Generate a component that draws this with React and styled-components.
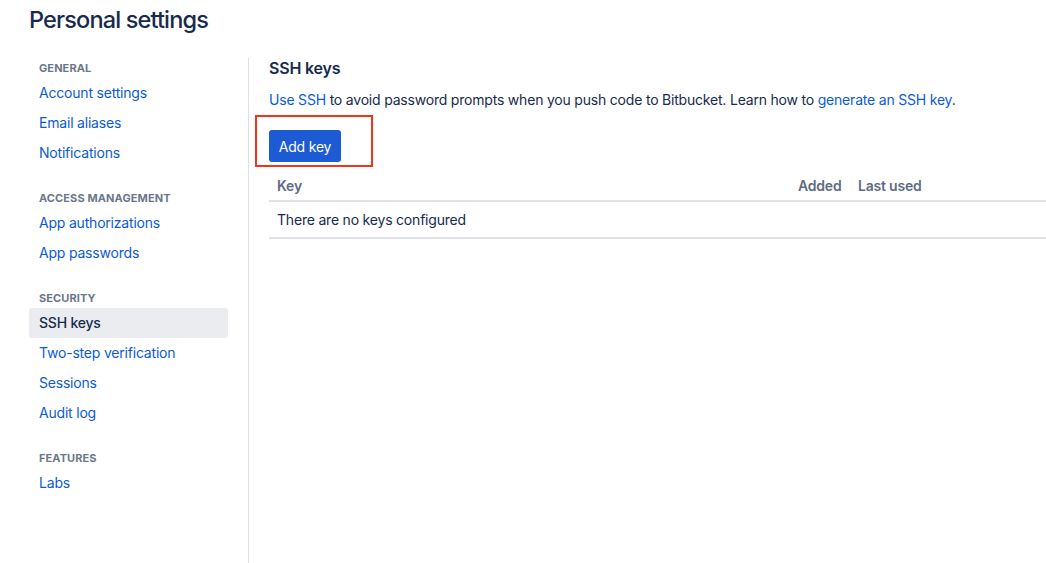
import React from "react";
import styled, { createGlobalStyle } from "styled-components";

const Global = createGlobalStyle`
  html, body { margin: 0; padding: 0; background: #fff; }
  body { font-family: Inter, "Noto Sans", sans-serif; color: #172B4D; -webkit-font-smoothing: antialiased; }
  * { box-sizing: border-box; }
`;

const Page = styled.div`
  width: 1046px;
  height: 563px;
  overflow: hidden;
  padding-left: 29px;
`;

const Title = styled.h1`
  margin: 0;
  padding-top: 6px;
  height: 58px;
  font-size: 23.5px;
  line-height: 28px;
  font-weight: 500;
  color: #172B4D;
  letter-spacing: -0.85px;
`;

const Body = styled.div`
  display: flex;
  height: 505px;
  letter-spacing: -0.2px;
`;

const Sidebar = styled.nav`
  width: 220px;
  flex-shrink: 0;
  padding-right: 20px;
  border-right: 1px solid #DCDFE4;
  height: 100%;
`;

const Group = styled.div`
  margin-bottom: 20px;
`;

const GroupHeading = styled.div`
  height: 20px;
  line-height: 20px;
  padding-left: 10px;
  font-size: 11px;
  font-weight: 700;
  color: #6B778C;
  text-transform: uppercase;
  letter-spacing: 0.1px;
`;

const NavItem = styled.a`
  display: flex;
  align-items: center;
  height: 30px;
  padding-left: 10px;
  padding-bottom: 1px;
  border-radius: 3px;
  font-size: 14px;
  text-decoration: none;
  color: ${(p) => (p.$active ? "#172B4D" : "#0C5BD6")};
  background: ${(p) => (p.$active ? "#EBECF0" : "transparent")};
  font-weight: ${(p) => (p.$active ? 500 : 400)};
`;

const Main = styled.main`
  flex: 1;
  padding-left: 20px;
`;

const Heading = styled.h2`
  margin: 0;
  height: 20px;
  line-height: 20px;
  font-size: 16px;
  font-weight: 600;
  color: #172B4D;
`;

const Intro = styled.p`
  margin: 12px 0 0;
  font-size: 14px;
  line-height: 20px;
  color: #172B4D;
`;

const Link = styled.a`
  color: #0C5BD6;
  text-decoration: none;
`;

const ButtonRow = styled.div`
  margin-top: 20px;
  position: relative;
  height: 32px;
`;

const Highlight = styled.div`
  position: absolute;
  left: -14px;
  top: -15px;
  width: 118px;
  height: 52px;
  border: 2px solid #F3341A;
  pointer-events: none;
`;

const Button = styled.button`
  height: 32px;
  width: 72px;
  padding: 0;
  border: none;
  border-radius: 3px;
  background: #1D5BD5;
  color: #fff;
  font-family: inherit;
  letter-spacing: -0.2px;
  font-size: 14px;
  font-weight: 400;
`;

const Table = styled.table`
  margin-top: 8px;
  width: 100%;
  border-collapse: collapse;
  font-size: 14px;
`;

const Th = styled.th`
  height: 31px;
  padding: 0 8px;
  text-align: left;
  width: ${(p) => p.$w || "auto"};
  font-weight: 600;
  color: #5E6C84;
  border-bottom: 2px solid #DFE1E6;
  vertical-align: middle;
`;

const Td = styled.td`
  height: 37px;
  padding: 0 8px;
  color: #172B4D;
  border-bottom: 2px solid #DFE1E6;
`;

const groups = [
  { title: "General", items: ["Account settings", "Email aliases", "Notifications"] },
  { title: "Access management", items: ["App authorizations", "App passwords"] },
  { title: "Security", items: ["SSH keys", "Two-step verification", "Sessions", "Audit log"] },
  { title: "Features", items: ["Labs"] },
];

export default function App() {
  return (
    <Page>
      <Global />
      <Title>Personal settings</Title>
      <Body>
        <Sidebar>
          {groups.map((g) => (
            <Group key={g.title}>
              <GroupHeading>{g.title}</GroupHeading>
              {g.items.map((it) => (
                <NavItem key={it} href="#" $active={it === "SSH keys"}>
                  {it}
                </NavItem>
              ))}
            </Group>
          ))}
        </Sidebar>
        <Main>
          <Heading>SSH keys</Heading>
          <Intro>
            <Link href="#">Use SSH</Link> to avoid password prompts when you push code to Bitbucket. Learn how to{" "}
            <Link href="#">generate an SSH key</Link>.
          </Intro>
          <ButtonRow>
            <Highlight />
            <Button>Add key</Button>
          </ButtonRow>
          <Table>
            <thead>
              <tr>
                <Th>Key</Th>
                <Th $w="60px">Added</Th>
                <Th $w="196px">Last used</Th>
              </tr>
            </thead>
            <tbody>
              <tr>
                <Td colSpan={3}>There are no keys configured</Td>
              </tr>
            </tbody>
          </Table>
        </Main>
      </Body>
    </Page>
  );
}
